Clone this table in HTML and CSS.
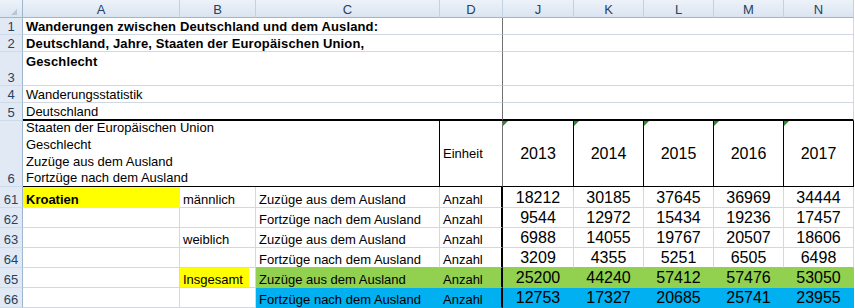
FILE: index.html
```html
<!DOCTYPE html>
<html lang="de">
<head>
<meta charset="utf-8">
<title>Wanderungen</title>
<link rel="stylesheet" href="styles.css">
</head>
<body>
<table class="sheet">
  <colgroup>
    <col class="w-rh"><col class="w-a"><col class="w-b"><col class="w-c"><col class="w-d">
    <col class="w-j"><col class="w-y"><col class="w-y"><col class="w-y"><col class="w-y">
  </colgroup>
  <thead>
    <tr class="h18">
      <th class="corner"><svg class="corner-tri" width="22" height="17" viewBox="0 0 22 17"><polygon points="17,9 17,15 11,15" fill="#b9c6d6"/></svg></th>
      <th class="ch">A</th><th class="ch">B</th><th class="ch">C</th><th class="ch">D</th>
      <th class="ch">J</th><th class="ch">K</th><th class="ch">L</th><th class="ch">M</th><th class="ch">N</th>
    </tr>
  </thead>
  <tbody>
    <tr class="h17">
      <th class="rn">1</th>
      <td class="fz b title" colspan="4">Wanderungen zwischen Deutschland und dem Ausland:</td>
      <td colspan="5"></td>
    </tr>
    <tr class="h17">
      <th class="rn">2</th>
      <td class="fz b title" colspan="4">Deutschland, Jahre, Staaten der Europäischen Union,</td>
      <td colspan="5"></td>
    </tr>
    <tr class="h34">
      <th class="rn">3</th>
      <td class="fz b title top" colspan="4">Geschlecht</td>
      <td colspan="5"></td>
    </tr>
    <tr class="h17">
      <th class="rn">4</th>
      <td class="fz" colspan="4">Wanderungsstatistik</td>
      <td colspan="5"></td>
    </tr>
    <tr class="h18">
      <th class="rn">5</th>
      <td class="fz thk" colspan="4">Deutschland</td>
      <td class="thk" colspan="5"></td>
    </tr>
    <tr class="h66">
      <th class="rn">6</th>
      <td class="hb vb" colspan="3">
        <div class="stack">
          <span>Staaten der Europäischen Union</span>
          <span>Geschlecht</span>
          <span>Zuzüge aus dem Ausland</span>
          <span>Fortzüge nach dem Ausland</span>
        </div>
      </td>
      <td class="hb fz mid">Einheit</td>
      <td class="hb vb yr">2013</td>
      <td class="hb vb yr">2014</td>
      <td class="hb vb yr">2015</td>
      <td class="hb vb yr">2016</td>
      <td class="hb vb yr">2017</td>
    </tr>
    <tr class="h21">
      <th class="rn">61</th>
      <td class="b yel">Kroatien</td>
      <td>männlich</td>
      <td>Zuzüge aus dem Ausland</td>
      <td class="dd">Anzahl</td>
      <td class="n">18212</td><td class="n">30185</td><td class="n">37645</td><td class="n">36969</td><td class="n">34444</td>
    </tr>
    <tr class="h20">
      <th class="rn">62</th>
      <td></td>
      <td></td>
      <td>Fortzüge nach dem Ausland</td>
      <td class="dd">Anzahl</td>
      <td class="n">9544</td><td class="n">12972</td><td class="n">15434</td><td class="n">19236</td><td class="n">17457</td>
    </tr>
    <tr class="h20">
      <th class="rn">63</th>
      <td></td>
      <td>weiblich</td>
      <td>Zuzüge aus dem Ausland</td>
      <td class="dd">Anzahl</td>
      <td class="n">6988</td><td class="n">14055</td><td class="n">19767</td><td class="n">20507</td><td class="n">18606</td>
    </tr>
    <tr class="h20 pre-fill">
      <th class="rn">64</th>
      <td></td>
      <td></td>
      <td>Fortzüge nach dem Ausland</td>
      <td class="dd">Anzahl</td>
      <td class="n">3209</td><td class="n">4355</td><td class="n">5251</td><td class="n">6505</td><td class="n">6498</td>
    </tr>
    <tr class="h20 grn">
      <th class="rn">65</th>
      <td class="nofill"></td>
      <td class="yel-part">Insgesamt</td>
      <td>Zuzüge aus dem Ausland</td>
      <td class="dd">Anzahl</td>
      <td class="n">25200</td><td class="n">44240</td><td class="n">57412</td><td class="n">57476</td><td class="n">53050</td>
    </tr>
    <tr class="h20 blu">
      <th class="rn">66</th>
      <td class="nofill"></td>
      <td class="nofill"></td>
      <td>Fortzüge nach dem Ausland</td>
      <td class="dd">Anzahl</td>
      <td class="n">12753</td><td class="n">17327</td><td class="n">20685</td><td class="n">25741</td><td class="n">23955</td>
    </tr>
  </tbody>
</table>
</body>
</html>
```

FILE: styles.css
```css
html, body {
  margin: 0;
  padding: 0;
  background: #ffffff;
}

.sheet {
  border-collapse: separate;
  border-spacing: 0;
  table-layout: fixed;
  width: 854px;
  font-family: "Liberation Sans", Arial, sans-serif;
  font-size: 13px;
  color: #000000;
}

.w-rh { width: 23px; }
.w-a { width: 157px; }
.w-b { width: 76px; }
.w-c { width: 184px; }
.w-d { width: 63px; }
.w-j { width: 71px; }
.w-y { width: 70px; }

.h18 { height: 18px; }
.h17 { height: 17px; }
.h34 { height: 34px; }
.h66 { height: 66px; }
.h21 { height: 21px; }
.h20 { height: 20px; }

.sheet th,
.sheet td {
  padding: 0;
  white-space: nowrap;
  font-weight: normal;
}

/* column headers */
.sheet thead th {
  background: linear-gradient(to bottom, #edf2f9, #dae4f1);
  border-right: 1px solid #c3d1e2;
  border-bottom: 1px solid #9eb6ce;
  color: #27415e;
  text-align: center;
  vertical-align: middle;
  line-height: 15px;
  padding-top: 1px;
}

.sheet thead th.corner {
  border-right: 1px solid #9eb6ce;
  padding: 0;
  position: relative;
}

.corner-tri {
  display: block;
}

/* row headers */
.rn {
  background: #e1e9f5;
  border-right: 1px solid #9eb6ce;
  border-bottom: 1px solid #cfdbea;
  color: #27415e;
  text-align: center;
  vertical-align: bottom;
  line-height: 15px;
}

/* cells */
.sheet td {
  border-right: 1px solid #d0d7e5;
  border-bottom: 1px solid #d0d7e5;
  vertical-align: bottom;
  line-height: 15px;
  padding-left: 3px;
  padding-right: 2px;
}

.sheet td.b { font-weight: bold; }
.sheet td.title { letter-spacing: 0.13px; }
.sheet td.top { vertical-align: top; padding-top: 2px; }
.sheet td.mid { vertical-align: middle; }

.sheet td.fz { border-right-color: #707070; }
.sheet td.thk { border-bottom: 2px solid #000000; }
.sheet td.hb { border-bottom-color: #000000; }
.sheet td.vb { border-right-color: #000000; }
.sheet td.dd { border-right: 2px solid #000000; }

.stack {
  height: 65px;
  margin-bottom: -1px;
  display: flex;
  flex-direction: column;
  justify-content: flex-end;
  line-height: 16.7px;
}

.sheet td.yr {
  position: relative;
  font-size: 16px;
  text-align: center;
  vertical-align: middle;
  padding-left: 0;
  padding-right: 0;
}

.sheet td.yr::before {
  content: "";
  position: absolute;
  top: 0;
  left: 0;
  width: 0;
  height: 0;
  border-top: 5px solid #2b8a2f;
  border-right: 5px solid transparent;
}

.sheet td.n {
  font-size: 16px;
  line-height: 18px;
  text-align: center;
  padding-left: 0;
  padding-right: 0;
}

/* fills */
.sheet td.yel {
  background: #ffff00;
  border-right-color: #ffff00;
  border-bottom-color: #ffff00;
}

.sheet .pre-fill td:nth-of-type(n+3) {
  border-bottom-color: #92d050;
}

.sheet .grn td {
  background: #92d050;
  border-right-color: #92d050;
  border-bottom-color: #92d050;
}

.sheet .blu td {
  background: #00b0f0;
  border-right-color: #00b0f0;
  border-bottom-color: #00b0f0;
}

.sheet .grn td.nofill,
.sheet .blu td.nofill {
  background: #ffffff;
  border-right-color: #d0d7e5;
  border-bottom-color: #d0d7e5;
}

.sheet .grn td.yel-part {
  background: linear-gradient(to right, #ffff00 69px, #ffffff 69px);
  border-right-color: #d0d7e5;
  border-bottom-color: #d0d7e5;
}

.sheet .grn td.dd,
.sheet .blu td.dd {
  border-right-color: #000000;
}
```
